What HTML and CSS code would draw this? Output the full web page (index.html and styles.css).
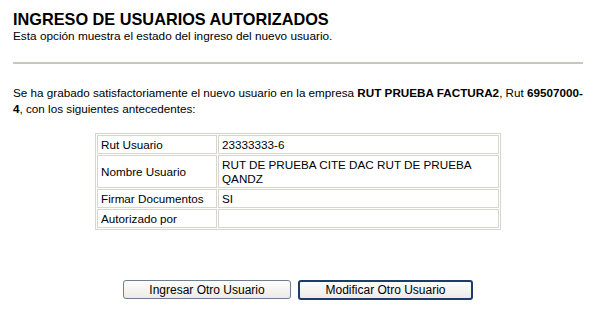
FILE: index.html
```html
<!DOCTYPE html>
<html>
<head>
<meta charset="utf-8">
<link rel="stylesheet" href="styles.css">
</head>
<body>
<div class="page">
  <h1 class="title">INGRESO DE USUARIOS AUTORIZADOS</h1>
  <p class="subtitle">Esta opción muestra el estado del ingreso del nuevo usuario.</p>
  <hr class="rule">
  <p class="msg">Se ha grabado satisfactoriamente el nuevo usuario en la empresa <b>RUT PRUEBA FACTURA2</b>, Rut <b>69507000-<wbr>4</b>, con los siguientes antecedentes:</p>
  <table class="data">
    <tr><td class="lbl">Rut Usuario</td><td class="val">23333333-6</td></tr>
    <tr><td class="lbl">Nombre Usuario</td><td class="val">RUT DE PRUEBA CITE DAC RUT DE PRUEBA QANDZ</td></tr>
    <tr><td class="lbl">Firmar Documentos</td><td class="val">SI</td></tr>
    <tr><td class="lbl">Autorizado por</td><td class="val"></td></tr>
  </table>
  <div class="actions">
    <button class="btn">Ingresar Otro Usuario</button>
    <button class="btn btn-default">Modificar Otro Usuario</button>
  </div>
</div>
</body>
</html>
```
FILE: styles.css
```css
html, body {
  margin: 0;
  padding: 0;
  background: #fff;
}
body {
  font-family: "Liberation Sans", Arial, sans-serif;
  color: #000;
}
.page {
  padding: 9px 13px 0 13px;
}
.title {
  margin: 0;
  font-size: 16.3px;
  line-height: 20px;
  font-weight: bold;
}
.subtitle {
  margin: 0;
  font-size: 11.8px;
  line-height: 14px;
}
.rule {
  margin: 19px 4px 0 0;
  border: 0;
  height: 2px;
  background: #c9c8b8;
}
.msg {
  margin: 21px 0 0 0;
  font-size: 11.7px;
  line-height: 16px;
}
.data {
  margin: 16px 0 0 82px;
  width: 406px;
  border: 1px solid #d8d6cc;
  border-collapse: separate;
  border-spacing: 1px;
  font-size: 11.7px;
}
.data td {
  border: 1px solid #d8d6cc;
  padding: 2px 3px 1px 3px;
  line-height: 14px;
  vertical-align: middle;
  height: 14px;
}
.data .lbl {
  width: 112px;
}
.actions {
  display: flex;
  justify-content: center;
  gap: 7px;
  margin-top: 50px;
  padding-right: 4px;
}
.btn {
  font-family: "Liberation Sans", Arial, sans-serif;
  font-size: 12px;
  height: 19px;
  width: 168px;
  background: linear-gradient(#fdfdfb, #ecebe6);
  border: 1px solid #6d7f94;
  border-radius: 3px;
  color: #000;
  padding: 0;
}
.btn-default {
  width: 175px;
  height: 20px;
  border: 2px solid #1e3c6a;
}
```
